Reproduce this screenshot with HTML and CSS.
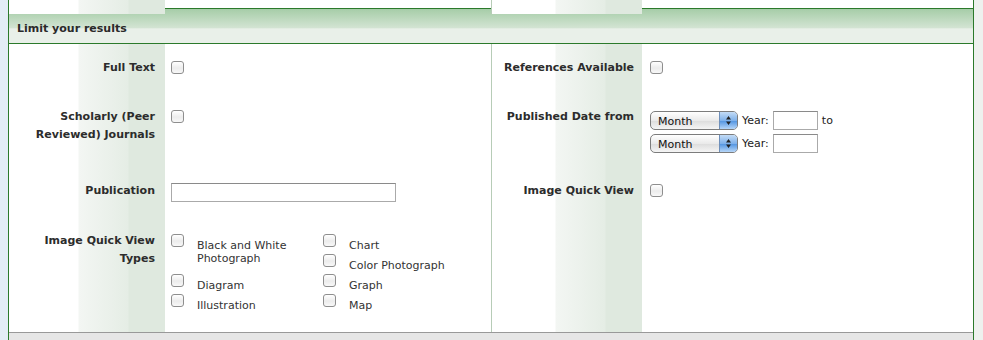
FILE: index.html
```html
<!DOCTYPE html>
<html>
<head>
    <meta charset="utf-8">
    <title>Limit your results</title>
    <link rel="stylesheet" href="styles.css">
</head>
<body>
    <div class="page">

        <div class="grid prev">
            <div class="label"></div>
            <div class="control"></div>
            <div class="label right"></div>
            <div class="control"></div>
        </div>

        <div class="panel-head">Limit your results</div>

        <div class="grid panel-body">
            <!-- row 1 -->
            <div class="label">Full Text</div>
            <div class="control"><input type="checkbox" class="check"></div>
            <div class="label right">References Available</div>
            <div class="control"><input type="checkbox" class="check"></div>

            <!-- row 2 -->
            <div class="label">Scholarly (Peer<br>Reviewed) Journals</div>
            <div class="control"><input type="checkbox" class="check"></div>
            <div class="label right">Published Date from</div>
            <div class="control">
                <div class="date-line">
                    <div class="select">
                        <span class="select-text">Month</span>
                        <span class="select-arrows">
                            <svg width="7" height="11" viewBox="0 0 7 11"><path d="M3.5 1 L6 4.5 L1 4.5 Z M3.5 10 L6 6.5 L1 6.5 Z" fill="#222"/></svg>
                        </span>
                    </div>
                    <span class="year">Year:</span>
                    <input type="text" class="year-input">
                    <span class="year">to</span>
                </div>
                <div class="date-line">
                    <div class="select">
                        <span class="select-text">Month</span>
                        <span class="select-arrows">
                            <svg width="7" height="11" viewBox="0 0 7 11"><path d="M3.5 1 L6 4.5 L1 4.5 Z M3.5 10 L6 6.5 L1 6.5 Z" fill="#222"/></svg>
                        </span>
                    </div>
                    <span class="year">Year:</span>
                    <input type="text" class="year-input">
                </div>
            </div>

            <!-- row 3 -->
            <div class="label">Publication</div>
            <div class="control"><input type="text" class="text-input"></div>
            <div class="label right">Image Quick View</div>
            <div class="control"><input type="checkbox" class="check"></div>

            <!-- row 4 -->
            <div class="label">Image Quick View<br>Types</div>
            <div class="control">
                <div class="options">
                    <label class="option tall"><input type="checkbox" class="check"><span>Black and White Photograph</span></label>
                    <label class="option"><input type="checkbox" class="check"><span>Diagram</span></label>
                    <label class="option"><input type="checkbox" class="check"><span>Illustration</span></label>
                    <label class="option"><input type="checkbox" class="check"><span>Chart</span></label>
                    <label class="option"><input type="checkbox" class="check"><span>Color Photograph</span></label>
                    <label class="option"><input type="checkbox" class="check"><span>Graph</span></label>
                    <label class="option"><input type="checkbox" class="check"><span>Map</span></label>
                </div>
            </div>
            <div class="label right"></div>
            <div class="control"></div>
        </div>

        <div class="panel-foot"></div>
    </div>
</body>
</html>
```

FILE: styles.css
```css
html,
body {
    height: 100%;
    margin: 0;
    overflow: hidden;
}
body {
    background: linear-gradient(to right, #e3edf6 8px, #eef1ee 8px);
    font-family: "DejaVu Sans", Verdana, sans-serif;
    font-size: 11px;
    color: #333;
}
.page {
    width: 964px;
    height: 100%;
    margin-left: 8px;
    border-left: 1px solid #2b7a2b;
    border-right: 1px solid #2b7a2b;
    background: #fff;
}

.grid {
    display: grid;
    grid-template-columns: 156px 326px 151px 331px;
}
.prev {
    height: 8px;
}
.panel-body {
    grid-template-rows: 49px 74px 50px 115px;
}

.label {
    padding: 15px 10px 0 0;
    text-align: right;
    font-weight: bold;
    line-height: 18px;
    color: #2c2c2c;
    background: linear-gradient(to right, #fff 69px, #f3f6f3 70px, #e5ede5 119px, #dfe9df 120px, #dfe9df);
}
.label.right {
    padding-right: 8px;
    border-left: 1px solid #b7ccb7;
    background: linear-gradient(to right, #fff 63px, #f3f6f3 64px, #e5ede5 113px, #dfe9df 114px, #dfe9df);
}
.prev .label {
    padding: 0;
}
.control {
    padding: 14px 0 0 6px;
}
.label.right + .control {
    padding-left: 8px;
}

.panel-head {
    height: 32px;
    padding: 2px 0 0 8px;
    line-height: 36px;
    border-top: 1px solid #2b7a2b;
    border-bottom: 1px solid #2b7a2b;
    background: linear-gradient(#a6cda8, #d3e4d3 56%, #e9f0e9 58%, #e9f0e9);
    font-weight: bold;
    color: #2a2a2a;
}
.panel-foot {
    height: 8px;
    border-top: 1px solid #999;
    background: #e6e6e6;
}

.check {
    -webkit-appearance: none;
    appearance: none;
    display: block;
    width: 13px;
    height: 13px;
    margin: 3px 0 0 0;
    border: 1px solid #8e8e8e;
    border-radius: 3px;
    background: linear-gradient(#ffffff, #ececec 55%, #f8f8f8);
    box-sizing: border-box;
}

.text-input {
    display: block;
    width: 225px;
    height: 19px;
    margin: 2px 0 0 0;
    padding: 0;
    box-sizing: border-box;
    border: 1px solid #aaa;
    border-top-color: #8a8a8a;
}

.date-line {
    display: flex;
    align-items: center;
    height: 19px;
    margin: 4px 0 4px 0;
}
.date-line + .date-line {
    margin-top: 0;
}
.select {
    display: flex;
    width: 88px;
    height: 19px;
    box-sizing: border-box;
    border: 1px solid #7c7c7c;
    border-radius: 5px;
    overflow: hidden;
    background: linear-gradient(#ffffff, #eaeaea 50%, #dcdcdc 51%, #f5f5f5);
}
.select-text {
    flex: 1;
    padding: 1px 0 0 7px;
    line-height: 18px;
    color: #111;
}
.select-arrows {
    display: flex;
    align-items: center;
    justify-content: center;
    width: 17px;
    border-left: 1px solid #6e8fba;
    background: linear-gradient(#c4dcf6, #7fb1ea 50%, #4f92e0 51%, #b6d6f8);
}
.year {
    margin-left: 4px;
    color: #222;
}
.year-input {
    width: 45px;
    height: 19px;
    margin: 0 0 0 4px;
    padding: 0;
    box-sizing: border-box;
    border: 1px solid #aaa;
    border-top-color: #8a8a8a;
}

.options {
    display: grid;
    grid-template-columns: 152px 160px;
    grid-template-rows: repeat(4, 20px);
    grid-auto-flow: column;
    padding-top: 3px;
}
.option {
    display: flex;
    align-items: flex-start;
}
.option.tall {
    grid-row: span 2;
}
.option .check {
    margin: 0;
    flex: none;
}
.option span {
    margin-left: 13px;
    padding-top: 5px;
    line-height: 13px;
    width: 115px;
}
.options .option:nth-child(n+4) span {
    width: auto;
}
```
